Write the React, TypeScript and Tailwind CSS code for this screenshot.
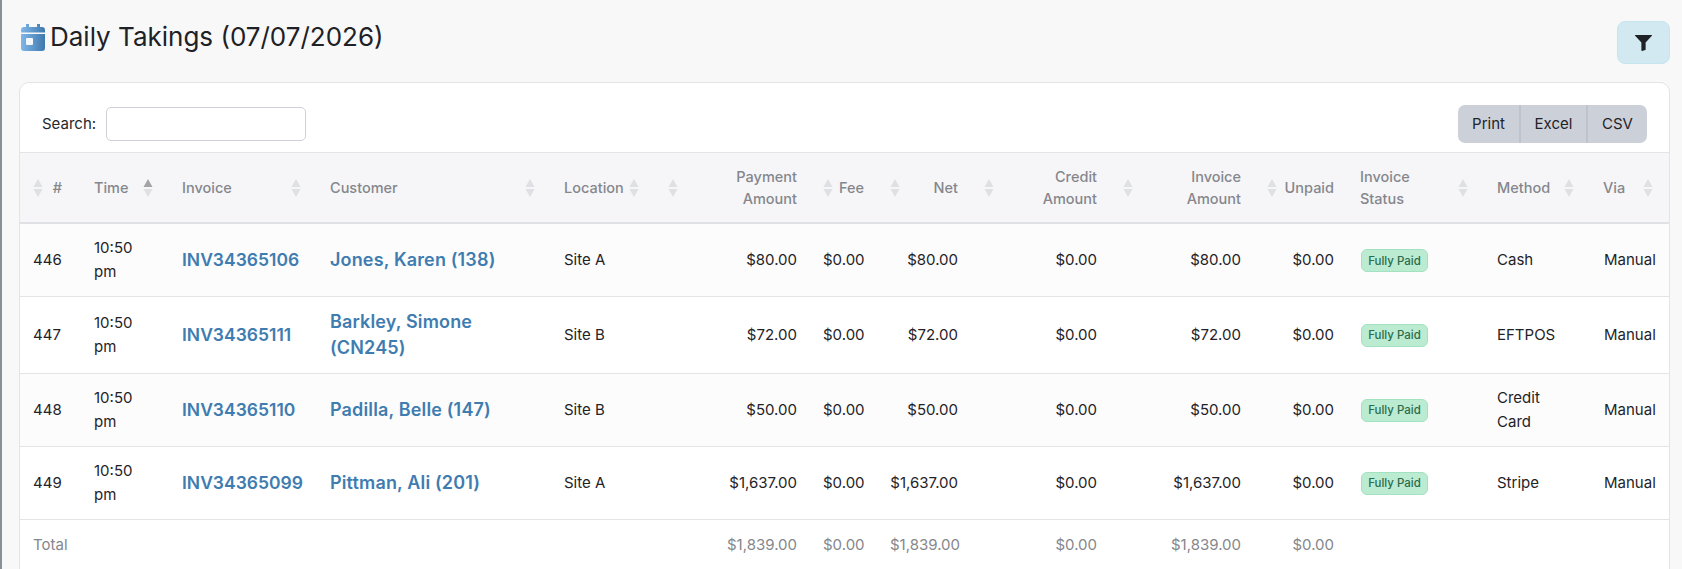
import React from "react";

function Sort({ active = false }: { active?: boolean }) {
  return (
    <svg width="10" height="19" viewBox="0 0 10 19" className="shrink-0">
      <path d="M5 0 L9.5 8 L0.5 8 Z" fill={active ? "#a4a4a8" : "#dfe0e3"} />
      <path d="M5 18 L9.5 10 L0.5 10 Z" fill="#dfe0e3" />
    </svg>
  );
}

function HeadL({ children, active }: { children: React.ReactNode; active?: boolean }) {
  return (
    <th className="px-[13px] text-left font-medium align-middle">
      <div className="flex items-center justify-between">
        <span>{children}</span>
        <span className="pr-[3px]"><Sort active={active} /></span>
      </div>
    </th>
  );
}

function HeadR({ children, tight = false }: { children: React.ReactNode; tight?: boolean }) {
  return (
    <th className={`pl-[13px] text-right font-medium align-middle ${tight ? "pr-[19px]" : "pr-[13px]"}`}>
      <div className="flex items-center justify-between">
        <Sort />
        <span>{children}</span>
      </div>
    </th>
  );
}

const rows = [
  { n: "446", inv: "INV34365106", cust: <>Jones, Karen (138)</>, loc: "Site A", pay: "$80.00", method: <>Cash</>, h: "h-[72px]", bg: "bg-[#fcfcfc]" },
  { n: "447", inv: "INV34365111", cust: <>Barkley, Simone<br />(CN245)</>, loc: "Site B", pay: "$72.00", method: <>EFTPOS</>, h: "h-[77px]", bg: "bg-white" },
  { n: "448", inv: "INV34365110", cust: <>Padilla, Belle (147)</>, loc: "Site B", pay: "$50.00", method: <>Credit<br />Card</>, h: "h-[73px]", bg: "bg-[#fcfcfc]" },
  { n: "449", inv: "INV34365099", cust: <>Pittman, Ali (201)</>, loc: "Site A", pay: "$1,637.00", method: <>Stripe</>, h: "h-[73px]", bg: "bg-white" },
];

const widths = ["w-[61px]", "w-[88px]", "w-[148px]", "w-[234px]", "w-[104px]", "w-[155px]", "w-[67px]", "w-[94px]", "w-[139px]", "w-[144px]", "w-[93px]", "w-[137px]", "w-[106px]", "w-[79px]"];

export default function App() {
  return (
    <div className="h-[569px] overflow-hidden border-l-2 border-[#8b9095] bg-[#f8f8f9] pl-[17px] pr-[12px] pt-[21px] text-[#1f2328] [font-family:Inter,'Noto_Sans',sans-serif]">
      <div className="flex items-start justify-between">
        <h1 className="mt-[1px] flex items-center gap-[5px] text-[26px] leading-[30px] font-normal tracking-[0px] text-[#1e2126]">
          <svg width="24" height="27" viewBox="0 0 24 27" className="ml-[2px]">
            <defs>
              <linearGradient id="cal" x1="0" x2="1" y1="0" y2="0">
                <stop offset="0" stopColor="#7fb7ea" />
                <stop offset="1" stopColor="#3f78ad" />
              </linearGradient>
            </defs>
            <path d="M5 0h3v3h8V0h3v3h2a3 3 0 0 1 3 3v2.5H0V6a3 3 0 0 1 3-3h2z" fill="url(#cal)" />
            <path d="M0 10h24v14a3 3 0 0 1-3 3H3a3 3 0 0 1-3-3z" fill="url(#cal)" />
            <rect x="5" y="14" width="7" height="7" rx="1" fill="#f2f7fc" />
          </svg>
          Daily Takings (07/07/2026)
        </h1>
        <button className="flex h-[43px] w-[53px] items-center justify-center rounded-[8px] border border-[#c8e5ef] bg-[#d3e9f1] text-[#1f2328]">
          <svg width="17" height="16" viewBox="0 0 16 15" fill="currentColor">
            <path d="M0.4 0h15.2c.4 0 .5.4.3.7L10 7v6.6c0 .3-.2.5-.4.6l-2.8 .8c-.4 .1-.8-.2-.8-.6V7L.1.7C-.1.4 0 0 .4 0z" />
          </svg>
        </button>
      </div>

      <div className="mt-[18px] overflow-hidden rounded-t-[10px] border border-[#e3e4e6] bg-white">
        <div className="flex h-[69px] items-start justify-between pl-[22px] pr-[22px] pt-[22px]">
          <label className="flex items-center gap-[10px] pt-[2px] text-[15px] text-[#25282c]">
            Search:
            <input className="h-[34px] w-[200px] rounded-[5px] border border-[#ced1d6] bg-white" />
          </label>
          <div className="flex h-[38px] overflow-hidden rounded-[7px] bg-[#ccd1d9] text-[15px] text-[#1f2328]">
            <button className="w-[63px] border-r-2 border-[#bec4cc]">Print</button>
            <button className="w-[67px] border-r-2 border-[#bec4cc]">Excel</button>
            <button className="w-[59px]">CSV</button>
          </div>
        </div>

        <table className="w-[1649px] table-fixed border-collapse text-[15px]">
          <colgroup>
            {widths.map((w) => (
              <col key={w} className={w} />
            ))}
          </colgroup>
          <thead>
            <tr className="h-[72px] bg-[#f6f6f9] text-[14.5px] leading-[22px] text-[#85878c] shadow-[inset_0_1px_0_#e3e4e6,inset_0_-2px_0_#e0e1e4]">
              <HeadR tight>#</HeadR>
              <HeadL active>Time</HeadL>
              <HeadL>Invoice</HeadL>
              <HeadL>Customer</HeadL>
              <HeadL>Location</HeadL>
              <HeadR>Payment<br />Amount</HeadR>
              <HeadR>Fee</HeadR>
              <HeadR>Net</HeadR>
              <HeadR>Credit<br />Amount</HeadR>
              <HeadR>Invoice<br />Amount</HeadR>
              <HeadR>Unpaid</HeadR>
              <HeadL>Invoice<br />Status</HeadL>
              <HeadL>Method</HeadL>
              <HeadL>Via</HeadL>
            </tr>
          </thead>
          <tbody className="leading-[24px]">
            {rows.map((r) => (
              <tr key={r.n} className={`${r.h} ${r.bg} border-b border-[#e3e4e6]`}>
                <td className="px-[13px]">{r.n}</td>
                <td className="px-[13px]">10:50<br />pm</td>
                <td className="px-[13px] text-[17.5px] leading-[26px] font-semibold text-[#3f7cb0]">{r.inv}</td>
                <td className="px-[13px] text-[18px] leading-[26px] font-semibold tracking-[0.15px] text-[#3f7cb0]">{r.cust}</td>
                <td className="px-[13px]">{r.loc}</td>
                <td className="px-[13px] text-right">{r.pay}</td>
                <td className="px-[13px] text-right">$0.00</td>
                <td className="px-[13px] text-right">{r.pay}</td>
                <td className="px-[13px] text-right">$0.00</td>
                <td className="px-[13px] text-right">{r.pay}</td>
                <td className="px-[13px] text-right">$0.00</td>
                <td className="pl-[14px] pr-[12px]">
                  <span className="inline-flex h-[23px] w-[67px] items-center justify-center rounded-[6px] border border-[#a3e2c0] bg-[#bbebd1] text-[11.5px] font-medium text-[#2c6b4c]">Fully Paid</span>
                </td>
                <td className="px-[13px]">{r.method}</td>
                <td className="pl-[14px] pr-[12px]">Manual</td>
              </tr>
            ))}
          </tbody>
          <tfoot>
            <tr className="h-[51px] text-[#85878c]">
              <td className="px-[13px]" colSpan={5}>Total</td>
              <td className="px-[13px] text-right">$1,839.00</td>
              <td className="px-[13px] text-right">$0.00</td>
              <td className="px-[13px] text-right">$1,839.00</td>
              <td className="px-[13px] text-right">$0.00</td>
              <td className="px-[13px] text-right">$1,839.00</td>
              <td className="px-[13px] text-right">$0.00</td>
              <td colSpan={3}></td>
            </tr>
          </tfoot>
        </table>
      </div>
    </div>
  );
}
